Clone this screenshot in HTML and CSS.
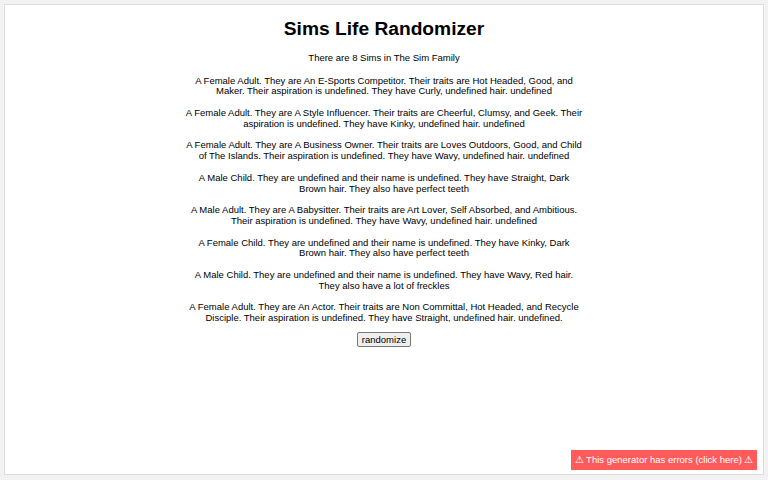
FILE: index.html
```html
<!DOCTYPE html>
<html>
<head>
<meta charset="utf-8">
<link rel="stylesheet" href="styles.css">
</head>
<body>
<div class="card">
  <h1 class="title">Sims Life Randomizer</h1>
  <div class="content">
    <p>There are 8 Sims in The Sim Family</p>
    <p>A Female Adult. They are An E-Sports Competitor. Their traits are Hot Headed, Good, and Maker. Their aspiration is undefined. They have Curly, undefined hair. undefined</p>
    <p>A Female Adult. They are A Style Influencer. Their traits are Cheerful, Clumsy, and Geek. Their aspiration is undefined. They have Kinky, undefined hair. undefined</p>
    <p>A Female Adult. They are A Business Owner. Their traits are Loves Outdoors, Good, and Child of The Islands. Their aspiration is undefined. They have Wavy, undefined hair. undefined</p>
    <p>A Male Child. They are undefined and their name is undefined. They have Straight, Dark Brown hair. They also have perfect teeth</p>
    <p>A Male Adult. They are A Babysitter. Their traits are Art Lover, Self Absorbed, and Ambitious. Their aspiration is undefined. They have Wavy, undefined hair. undefined</p>
    <p>A Female Child. They are undefined and their name is undefined. They have Kinky, Dark Brown hair. They also have perfect teeth</p>
    <p>A Male Child. They are undefined and their name is undefined. They have Wavy, Red hair. They also have a lot of freckles</p>
    <p>A Female Adult. They are An Actor. Their traits are Non Committal, Hot Headed, and Recycle Disciple. Their aspiration is undefined. They have Straight, undefined hair. undefined.</p>
  </div>
  <button class="btn">randomize</button>
</div>
<div class="error">⚠ This generator has errors (click here) ⚠</div>
</body>
</html>
```
FILE: styles.css
```css
html, body {
  margin: 0;
  padding: 0;
}
body {
  background: #f2f2f2;
  font-family: "Liberation Sans", Arial, sans-serif;
  padding: 4px;
  box-sizing: border-box;
  height: 480px;
}
.card {
  background: #fff;
  border: 1px solid #dcdcdc;
  height: 471px;
  box-sizing: border-box;
  display: flex;
  flex-direction: column;
  align-items: center;
  padding-top: 13px;
}
.title {
  font-size: 19.2px;
  font-weight: bold;
  margin: 0 0 13px 0;
  line-height: 22px;
  color: #000;
}
.content {
  width: 399px;
  text-align: center;
  font-size: 9.5px;
  line-height: 10.8px;
  color: #000;
}
.content p {
  margin: 0 0 10.8px 0;
}
.content p:first-child {
  margin-bottom: 11.8px;
}
.content p:last-child {
  margin-bottom: 8px;
}
.btn {
  font-family: "Liberation Sans", Arial, sans-serif;
  font-size: 9.5px;
  padding: 1px 4px;
  line-height: 11px;
  border: 1px solid #767676;
  border-radius: 2px;
  background: #efefef;
  color: #000;
  margin-top: 0;
}
.error {
  position: fixed;
  right: 11px;
  bottom: 10px;
  background: #ff5b5b;
  color: #fff;
  font-size: 9.5px;
  line-height: 20px;
  padding: 0 3.5px;
}
```
